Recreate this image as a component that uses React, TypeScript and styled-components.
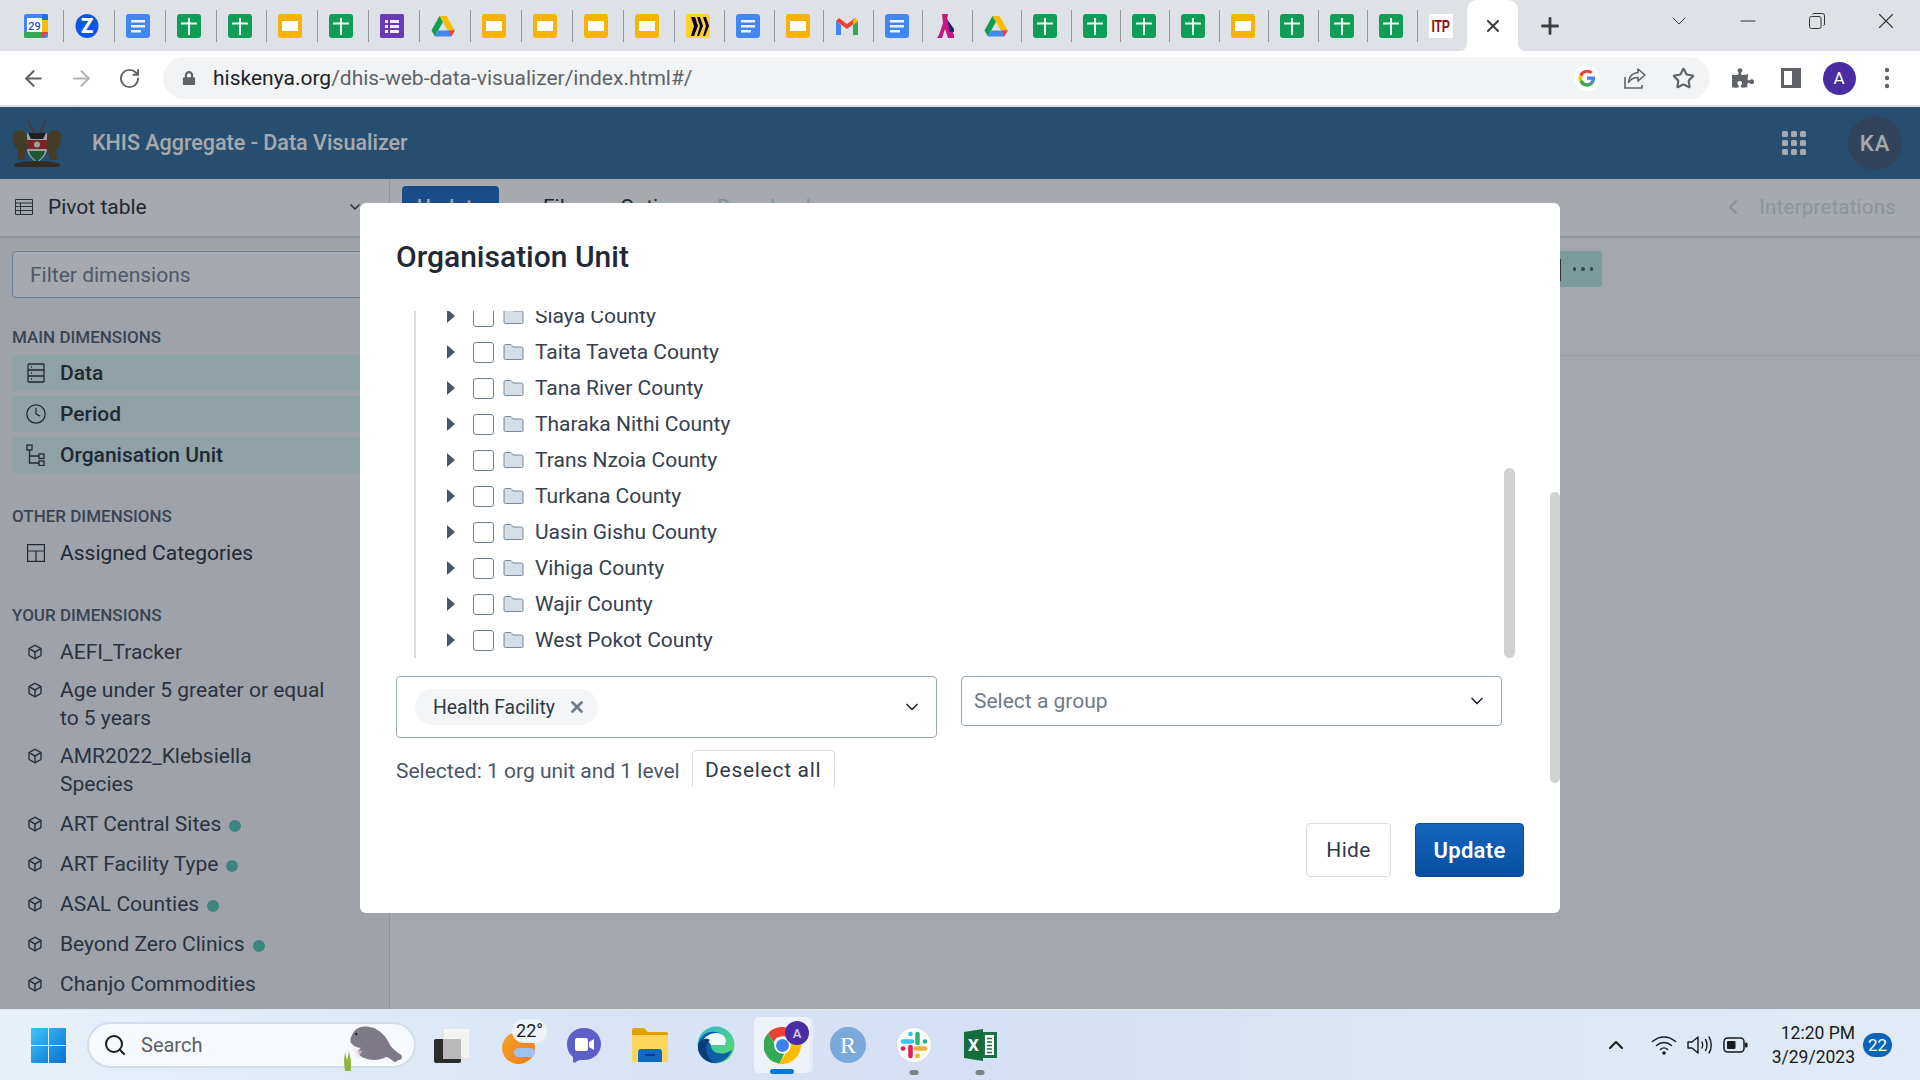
import React from 'react';
import styled, { createGlobalStyle } from 'styled-components';
import { ArrowLeft, ArrowRight, RotateCw, Star, Plus, X, ChevronDown, ChevronUp, ChevronLeft, Minus, Box, Clock, Search } from 'lucide-react';
import { FaPuzzlePiece, FaLock } from 'react-icons/fa';

const GlobalStyle = createGlobalStyle`
	html, body {
		margin: 0;
		padding: 0;
		width: 1920px;
		height: 1080px;
		overflow: hidden;
		font-family: Roboto, 'Liberation Sans', sans-serif;
	}
	* { box-sizing: border-box; }
`;

const Sheets = () => (
	<svg width='24' height='24' viewBox='0 0 24 24'>
		<rect width='24' height='24' rx='3' fill='#0f9d58' />
		<path d='M4 8.500h7V4h2v4.500h7v2h-7V21h-2V10.500H4z' fill='#f1f8f4' />
	</svg>
);
const Slides = () => (
	<svg width='24' height='24' viewBox='0 0 24 24'>
		<rect width='24' height='24' rx='3' fill='#f4b400' />
		<rect x='4' y='7' width='16' height='10' fill='#fff' />
	</svg>
);
const Docs = () => (
	<svg width='24' height='24' viewBox='0 0 24 24'>
		<rect width='24' height='24' rx='3' fill='#4285f4' />
		<path d='M5 6h14v2.400H5zM5 11h14v2.400H5zM5 16h10v2.400H5z' fill='#eef3fe' />
	</svg>
);
const Forms = () => (
	<svg width='24' height='24' viewBox='0 0 24 24'>
		<rect width='24' height='24' rx='1.500' fill='#673ab7' />
		<path d='M5 6h3v3H5zM10 6h9v3h-9zM5 11h3v3H5zM10 11h9v3h-9zM5 16h3v3H5zM10 16h9v3h-9z' fill='#efe9f8' />
	</svg>
);
const Drive = () => (
	<svg width='24' height='24' viewBox='0 0 24 24'>
		<path d='M8.500 2h7l8.300 14.600h-7z' fill='#fbbc04' />
		<path d='M8.500 2 .4 16.600l3.600 6L11.900 8z' fill='#0f9d58' />
		<path d='M7.600 16.600h16.200l-3.600 6H4z' fill='#4285f4' />
		<path d='M20.200 22.600l3.600-6h-6z' fill='#ea4335' />
	</svg>
);
const Miro = () => (
	<svg width='24' height='24' viewBox='0 0 24 24'>
		<rect x='0' width='24' height='24' rx='3' fill='#ffd02f' />
		<path d='M5 3l4 0 3 9-4 10H5l3-10zM11 3h3l3 9-4 10h-2l3-10zM17 3h3l3 9-4 10h-2l3-10z' fill='#050038' />
	</svg>
);
const Gmail = () => (
	<svg width='24' height='24' viewBox='0 0 24 24'>
		<path d='M1 7v14h5V11z' fill='#4285f4' />
		<path d='M18 11v10h5V7z' fill='#34a853' />
		<path d='M1 7l11 8 11-8-3-3-8 6-8-6z' fill='#ea4335' />
		<path d='M18 7l2-3 3 3-5 4z' fill='#fbbc04' />
	</svg>
);
const Ascent = () => (
	<svg width='24' height='24' viewBox='0 0 24 24'>
		<path d='M8 0h6l-1 5 7 16v3h-6l-3-9-3 9H3l2-3 4-12z' fill='#c8157f' />
		<path d='M13 5l7 10v3h-4z' fill='#1d2b6b' />
	</svg>
);
const CalendarIcon = () => (
	<svg width='24' height='24' viewBox='0 0 24 24'>
		<rect width='24' height='24' rx='2' fill='#4285f4' />
		<path d='M0 18h18v6H2a2 2 0 0 1-2-2z' fill='#34a853' />
		<path d='M18 0h4a2 2 0 0 1 2 2v4h-6z' fill='#1a73e8' />
		<path d='M18 6h6v12h-6z' fill='#fbbc04' />
		<path d='M18 18h6l-6 6z' fill='#ea4335' />
		<rect x='3' y='4' width='15' height='14' fill='#fff' />
		<text x='10.500' y='15.500' fontSize='11' textAnchor='middle' fill='#1a56b8' fontFamily='Roboto' fontWeight='500'>29</text>
	</svg>
);
const ZIcon = () => (
	<svg width='24' height='24' viewBox='0 0 24 24'>
		<ellipse cx='12' cy='12' rx='11.500' ry='12' fill='#0b57e8' />
		<text x='12' y='19' fontSize='20' textAnchor='middle' fill='#fff' fontFamily='Roboto' fontWeight='900'>Z</text>
	</svg>
);
const ItpMark = styled.div`
	width: 24px;
	height: 24px;
	background: #fff;
	color: #8b0f0f;
	display: flex;
	align-items: center;
	justify-content: center;
	span {
		display: block;
		font: 700 17px/1 'Liberation Sans', sans-serif;
		letter-spacing: -0.5px;
		transform: scaleX(0.72);
	}
`;

const tabIcons = [
	<CalendarIcon />, <ZIcon />, <Docs />, <Sheets />, <Sheets />, <Slides />, <Sheets />, <Forms />, <Drive />,
	<Slides />, <Slides />, <Slides />, <Slides />, <Miro />, <Docs />, <Slides />, <Gmail />, <Docs />, <Ascent />,
	<Drive />, <Sheets />, <Sheets />, <Sheets />, <Sheets />, <Slides />, <Sheets />, <Sheets />, <Sheets />,
	<ItpMark><span>ITP</span></ItpMark>,
];

const GoogleG = () => (
	<svg width='26' height='26' viewBox='0 0 24 24'>
		<circle cx='12' cy='12' r='12' fill='#fff' />
		<path d='M19.500 12.200c0-.6-.1-1.100-.2-1.600H12v3h4.200a3.600 3.600 0 0 1-1.600 2.400v2h2.500c1.500-1.400 2.400-3.400 2.400-5.800z' fill='#4285f4' />
		<path d='M12 20c2.100 0 3.900-.7 5.100-1.900l-2.500-2c-.7.500-1.600.8-2.600.8-2 0-3.700-1.400-4.300-3.200H5.100v2A8 8 0 0 0 12 20z' fill='#34a853' />
		<path d='M7.700 13.700a4.800 4.800 0 0 1 0-3.100v-2H5.100a8 8 0 0 0 0 7.100z' fill='#fbbc05' />
		<path d='M12 7.200c1.100 0 2.200.4 3 1.200l2.200-2.200A8 8 0 0 0 5.100 8.600l2.600 2C8.300 8.600 10 7.200 12 7.200z' fill='#ea4335' />
	</svg>
);
const ShareIcon = () => (
	<svg width='24' height='24' viewBox='0 0 24 24' fill='none' stroke='#5f6368' strokeWidth='1.600'>
		<path d='M2 11v11h17v-3' />
		<path d='M15 3l7 6-7 6v-3.500c-4 0-7 1-9.500 5 .5-5.500 4-9.500 9.500-10z' strokeLinejoin='round' />
	</svg>
);
const SidePanelIcon = () => (
	<svg width='22' height='22' viewBox='0 0 22 22'>
		<rect x='1' y='1' width='20' height='20' fill='#5f6368' />
		<rect x='4' y='4' width='8' height='14' fill='#fff' />
	</svg>
);
const Kebab = () => (
	<svg width='6' height='22' viewBox='0 0 6 22'>
		<circle cx='3' cy='3' r='2.200' fill='#5f6368' />
		<circle cx='3' cy='11' r='2.200' fill='#5f6368' />
		<circle cx='3' cy='19' r='2.200' fill='#5f6368' />
	</svg>
);
const RestoreIcon = () => (
	<svg width='16' height='16' viewBox='0 0 16 16' fill='none' stroke='#333' strokeWidth='1'>
		<rect x='.5' y='3.500' width='11.500' height='12' rx='2' />
		<path d='M3.500 1.500A1.500 1.500 0 0 1 5 .5h8.500a2 2 0 0 1 2 2V11a1.500 1.500 0 0 1-1 1.500' />
	</svg>
);

const CoatOfArms = () => (
	<svg width='52' height='50' viewBox='0 0 52 50'>
		<path d='M17 3l9 18M35 3l-9 18' stroke='#6e3a30' strokeWidth='1.500' />
		<path d='M2 16c3-5 9-5 12-1 3 4 3 12 1 18l-2 9H6l1-9c-4-5-6-11-5-17z' fill='#5e4a1d' />
		<path d='M50 16c-3-5-9-5-12-1-3 4-3 12-1 18l2 9h7l-1-9c4-5 6-11 5-17z' fill='#5e4a1d' />
		<path d='M16 15h20v15c0 7-5 11-10 15-5-4-10-8-10-15z' fill='#f2f2f2' />
		<path d='M17 15h18l-3 6H20z' fill='#1a1a1a' />
		<path d='M16 22h20v9H16z' fill='#b3261e' />
		<path d='M18 33h16c-1 5-5 8-8 11-3-3-7-6-8-11z' fill='#1b7a35' />
		<circle cx='26' cy='26.500' r='3' fill='#f2f2f2' />
		<path d='M3 46c8-4 38-4 46 0l-1 3H4z' fill='#3d2e14' />
	</svg>
);

const PivotIcon = () => (
	<svg width='18' height='16' viewBox='0 0 18 16' fill='none' stroke='#2b3440' strokeWidth='1'>
		<path d='M.5.500h17v15H.5zM.5 4h17M.5 7.500h17M.5 11.500h17M5.500 4v11.500' />
	</svg>
);
const DataIcon = () => (
	<svg width='18' height='20' viewBox='0 0 18 20' fill='none' stroke='#212934' strokeWidth='1.300'>
		<rect x='1' y='1' width='16' height='18' rx='1' />
		<path d='M1 7h16M1 13h16M4 4h1M4 10h1M4 16h1' />
	</svg>
);
const OrgIcon = () => (
	<svg width='20' height='22' viewBox='0 0 20 22' fill='none' stroke='#212934' strokeWidth='1.300'>
		<rect x='1' y='1' width='5' height='5' />
		<rect x='13' y='10' width='5' height='4.500' />
		<rect x='13' y='17' width='5' height='4.500' />
		<path d='M3.500 6v13H13M3.500 12H13' />
	</svg>
);
const CategoriesIcon = () => (
	<svg width='18' height='18' viewBox='0 0 18 18' fill='none' stroke='#212934' strokeWidth='1.200'>
		<rect x='.6' y='.6' width='16.800' height='16.800' />
		<path d='M.6 7h16.800M9 7v10.400' />
	</svg>
);
const FolderIcon = () => (
	<svg width='21' height='18' viewBox='0 0 21 18'>
		<path d='M1 3a1.500 1.500 0 0 1 1.500-1.500H8L10 4h8.500A1.500 1.500 0 0 1 20 5.500V15a1.500 1.500 0 0 1-1.500 1.500h-16A1.500 1.500 0 0 1 1 15z' fill='#d5dde5' stroke='#7b8a9c' strokeWidth='1' />
	</svg>
);
const Caret = () => (
	<svg width='8' height='14' viewBox='0 0 8 14'>
		<path d='M0 0l8 7-8 7z' fill='#4a5768' />
	</svg>
);

const Manatee = () => (
	<svg width='68' height='50' viewBox='0 0 68 54'>
		<path d='M5 54c-1-6-2-12 0-20 1 4 1 6 2 8 1-3 2-6 2-10 2 7 3 14 2 22z' fill='#8fb53c' />
		<path d='M12 16c3-8 10-11 17-10 11 1 20 9 25 21 3 4 8 7 12 10 1 3-1 6-4 5-1 2-3 3-4 2-4-2-6-5-9-5-5 3-13 4-20 2-4-1-9-3-10-7-1-3 2-3 3-5-4 0-9-2-11-6-1-2 0-5 1-7z' fill='#7f7a88' />
		<path d='M14 28c3 3 6 4 10 4-2 3-5 6-3 9-4-2-7-8-7-13z' fill='#f0dede' opacity='.6' />
		<circle cx='17' cy='14' r='1.300' fill='#222' />
	</svg>
);
const WinLogo = () => (
	<svg width='35' height='35' viewBox='0 0 35 35'>
		<defs>
			<linearGradient id='wl' x1='0' y1='0' x2='1' y2='1'>
				<stop offset='0' stopColor='#3bc4f8' />
				<stop offset='1' stopColor='#0a6fd0' />
			</linearGradient>
		</defs>
		<path d='M1 0h16v17H0V1a1 1 0 0 1 1-1zM18 0h16a1 1 0 0 1 1 1v16H18zM0 18h17v17H1a1 1 0 0 1-1-1zM18 18h17v16a1 1 0 0 1-1 1H18z' fill='url(#wl)' />
	</svg>
);
const TaskView = () => (
	<svg width='36' height='36' viewBox='0 0 36 36'>
		<rect x='9' y='1' width='27' height='31' rx='2' fill='#f3f3f3' stroke='#ddd' />
		<rect x='0' y='12' width='27' height='24' rx='2' fill='#2c2c2c' />
		<rect x='9' y='12' width='18' height='20' fill='#c9c9c9' opacity='.9' />
	</svg>
);
const Teams = () => (
	<svg width='36' height='36' viewBox='0 0 36 36'>
		<path d='M18 1c10 0 17 7 17 16s-7 16-17 16c-3 0-6 0-8 2-1 1-3 1-3-1v-4C3 27 1 22 1 17 1 8 8 1 18 1z' fill='#5b5fc7' />
		<rect x='9' y='11' width='13' height='13' rx='2' fill='#fff' />
		<path d='M23 15l5-3v11l-5-3z' fill='#fff' />
	</svg>
);
const FolderApp = () => (
	<svg width='36' height='34' viewBox='0 0 36 34'>
		<path d='M0 2a2 2 0 0 1 2-2h10l4 4h18a2 2 0 0 1 2 2v4H0z' fill='#e0a008' />
		<path d='M0 7h36v27H0z' fill='#ffd65c' />
		<path d='M6 24a3 3 0 0 1 3-3h18a3 3 0 0 1 3 3v10H6z' fill='#0f6cbd' />
		<rect x='13' y='26' width='10' height='2' fill='#0a3f75' />
	</svg>
);
const EdgeIcon = () => (
	<svg width='38' height='38' viewBox='0 0 38 38'>
		<defs>
			<linearGradient id='eg' x1='0' y1='0' x2='1' y2='1'>
				<stop offset='0' stopColor='#2bb8d6' />
				<stop offset='1' stopColor='#5fdc62' />
			</linearGradient>
		</defs>
		<circle cx='19' cy='19' r='18.500' fill='url(#eg)' />
		<path d='M1 20C2 10 10 5 18 6c9 1 13 7 10 13H14c-1 6 6 10 15 8 2-1 4-2 6-3-3 8-10 13-17 13C10 37 0 30 1 20z' fill='#0f5ea8' />
		<path d='M14 19h14c3-6-1-12-9-12-6 0-12 4-14 9 3-2 6-3 9 3z' fill='#fff' opacity='.95' />
		<path d='M17 37c-9-1-16-8-16-17 1-7 8-9 12-6-5 4-6 15 4 23z' fill='#0b3d7a' />
	</svg>
);
const ChromeIcon = () => (
	<svg width='37' height='37' viewBox='0 0 36 36'>
		<path d='M18 0a18 18 0 0 1 15.600 9H18a9 9 0 0 0-8.500 6L4 6A18 18 0 0 1 18 0z' fill='#ea4335' />
		<path d='M4 6l8 14a7 7 0 0 0 8 5l-5 10.700A18 18 0 0 1 4 6z' fill='#34a853' />
		<path d='M33.600 9A18 18 0 0 1 15 35.700l9-15a7 7 0 0 0 0-9z' fill='#fbbc04' />
		<circle cx='18' cy='18' r='8' fill='#fff' />
		<circle cx='18' cy='18' r='6.300' fill='#3b82f0' />
	</svg>
);
const SlackIcon = () => (
	<svg width='36' height='36' viewBox='0 0 36 36'>
		<circle cx='18' cy='18' r='17.500' fill='#fafafa' stroke='#d5d8de' />
		<g strokeWidth='4.600' strokeLinecap='round' fill='none'>
			<path d='M7 14.500h9' stroke='#36c5f0' />
			<path d='M14.500 7v.1' stroke='#36c5f0' />
			<path d='M21.500 7v9' stroke='#2eb67d' />
			<path d='M29 14.500h-.1' stroke='#2eb67d' />
			<path d='M29 21.500h-9' stroke='#ecb22e' />
			<path d='M21.500 29v-.1' stroke='#ecb22e' />
			<path d='M14.500 29v-9' stroke='#e01e5a' />
			<path d='M7 21.500h.1' stroke='#e01e5a' />
		</g>
	</svg>
);
const ExcelIcon = () => (
	<svg width='33' height='32' viewBox='0 0 33 32'>
		<path d='M18 3h15v26H18z' fill='#1d7044' />
		<path d='M21 6h9v20h-9z' fill='#fff' />
		<path d='M23 9.500h5M23 13h5M23 16.500h5M23 20h5M23 23.500h5' stroke='#1d7044' strokeWidth='1.500' />
		<path d='M0 3l19-3v32L0 29z' fill='#146c3c' />
		<text x='9.500' y='22' fontSize='17' fontWeight='700' fill='#fff' textAnchor='middle' fontFamily='Roboto'>X</text>
	</svg>
);
const WifiIcon = () => (
	<svg width='26' height='22' viewBox='0 0 26 22' fill='none' stroke='#1a1a1a' strokeWidth='1.500' strokeLinecap='round'>
		<path d='M1.500 7.500c7-6 16-6 23 0M5.500 11.500c4.500-4 10.500-4 15 0M9.500 15.500c2-2 5-2 7 0' />
		<circle cx='13' cy='19' r='1.800' fill='#1a1a1a' stroke='none' />
	</svg>
);
const VolumeIcon = () => (
	<svg width='26' height='22' viewBox='0 0 26 22' fill='none' stroke='#1a1a1a' strokeWidth='1.400' strokeLinecap='round' strokeLinejoin='round'>
		<path d='M1 8v6h4l6 5V3L5 8z' />
		<path d='M15 8c1 2 1 4 0 6M18.500 5.500c2 3 2 8 0 11M22 3c3 4.500 3 11.500 0 16' />
	</svg>
);
const BatteryIcon = () => (
	<svg width='25' height='16' viewBox='0 0 25 16'>
		<rect x='1' y='1' width='20' height='14' rx='3.500' fill='none' stroke='#1a1a1a' strokeWidth='1.500' />
		<rect x='4' y='4' width='8.500' height='8' rx='1' fill='#1a1a1a' />
		<rect x='22' y='5.500' width='2.500' height='5' rx='1' fill='#1a1a1a' />
	</svg>
);

const Page = styled.div`
	width: 1920px;
	height: 1080px;
	display: flex;
	flex-direction: column;
	overflow: hidden;
	background: #fff;
	color: #212934;
`;

const TabStrip = styled.div`
	height: 51px;
	flex: none;
	background: #dee1e6;
	display: flex;
	padding-left: 13px;
`;
const Tab = styled.div<{ $wide: boolean }>`
	position: relative;
	width: ${p => (p.$wide ? 50.9 : 49.45)}px;
	flex: none;
	padding: 14px 0 0 11px;
	border-right: 1px solid #94979c;
	border-image: linear-gradient(to bottom, transparent 11px, #94979c 11px, #94979c 41px, transparent 41px) 1;
`;
const LastTab = styled(Tab)`
	border: 0;
`;
const ActiveTab = styled.div`
	width: 51px;
	flex: none;
	background: #fff;
	border-radius: 10px 10px 0 0;
	display: flex;
	align-items: center;
	justify-content: center;
	color: #3c4043;
	position: relative;
	&::before,
	&::after {
		content: '';
		position: absolute;
		bottom: 0;
		width: 8px;
		height: 8px;
		background: radial-gradient(circle at 0 0, #dee1e6 8px, #fff 8.500px);
	}
	&::before {
		left: -8px;
	}
	&::after {
		right: -8px;
		background: radial-gradient(circle at 100% 0, #dee1e6 8px, #fff 8.500px);
	}
`;
const NewTab = styled.div`
	width: 64px;
	flex: none;
	display: flex;
	align-items: center;
	justify-content: center;
	color: #3c4043;
`;
const WindowControls = styled.div`
	margin-left: auto;
	display: flex;
`;
const WindowButton = styled.div`
	width: 69px;
	height: 42px;
	display: flex;
	align-items: center;
	justify-content: center;
	color: #333;
`;

const Toolbar = styled.div`
	height: 54px;
	flex: none;
	display: flex;
	align-items: center;
	padding: 0 0 0 9px;
	background: #fff;
	border-bottom: 0;
`;
const ToolButton = styled.div<{ $muted?: boolean }>`
	width: 48px;
	height: 48px;
	flex: none;
	display: flex;
	align-items: center;
	justify-content: center;
	color: ${p => (p.$muted ? '#b0b3b8' : '#5f6368')};
`;
const AddressBar = styled.div`
	width: 1547px;
	height: 42px;
	margin: 0 9px 0 10px;
	flex: none;
	border-radius: 21px;
	background: #f1f3f4;
	display: flex;
	align-items: center;
	padding: 0 3px 0 19px;
	color: #5f6368;
`;
const Url = styled.div`
	margin-left: 17px;
	font-size: 21px;
	color: #5f6368;
	white-space: nowrap;
	flex: 1;
	b {
		font-weight: 400;
		color: #202124;
	}
`;
const OmniIcon = styled.div`
	width: 48px;
	flex: none;
	display: flex;
	align-items: center;
	justify-content: center;
	color: #5f6368;
`;
const Profile = styled.div`
	width: 33px;
	height: 33px;
	border-radius: 50%;
	background: #4b2da3;
	color: #fff;
	display: flex;
	align-items: center;
	justify-content: center;
	font-size: 17px;
`;
const ToolbarLine = styled.div`
	height: 2px;
	flex: none;
	background: #dadce0;
`;

const AppArea = styled.div`
	position: relative;
	height: 902px;
	flex: none;
	overflow: hidden;
	display: flex;
	flex-direction: column;
	background: #fafafd;
`;
const HeaderBar = styled.header`
	height: 72px;
	flex: none;
	background: #2c6896;
	color: #fff;
	display: flex;
	align-items: center;
`;
const LogoSlot = styled.div`
	width: 74px;
	height: 100%;
	flex: none;
	padding-left: 11px;
	display: flex;
	align-items: center;
	border-right: 1px solid #2a6390;
`;
const AppTitle = styled.div`
	margin: 0 0 2px 18px;
	font-size: 21.500px;
	font-weight: 500;
	flex: 1;
`;
const AppsGrid = styled.div`
	display: grid;
	grid-template-columns: repeat(3, 6px);
	gap: 3px;
	margin-right: 42px;
	span {
		width: 6px;
		height: 6px;
		border-radius: 1.500px;
		background: #fff;
	}
`;
const UserBadge = styled.div`
	width: 54px;
	height: 54px;
	margin-right: 18px;
	border-radius: 50%;
	background: #3c5776;
	display: flex;
	align-items: center;
	justify-content: center;
	font-size: 22px;
	font-weight: 500;
	letter-spacing: 1px;
`;

const Workspace = styled.div`
	flex: 1;
	min-height: 0;
	display: flex;
`;
const Sidebar = styled.aside`
	width: 390px;
	flex: none;
	background: #f3f5f7;
	border-right: 1px solid #d8dde3;
	overflow: hidden;
`;
const VisType = styled.div`
	height: 59px;
	display: flex;
	align-items: center;
	padding: 0 0 2px 15px;
	gap: 15px;
	font-size: 21px;
	background: #fff;
	border-bottom: 2px solid #d8dde3;
	position: relative;
`;
const VisCaret = styled.span`
	margin-left: auto;
	margin-right: 26px;
	display: flex;
`;
const FilterInput = styled.div`
	height: 47px;
	margin: 13px 12px 0;
	padding-left: 17px;
	display: flex;
	align-items: center;
	border: 1px solid #a0b4cf;
	border-radius: 4px;
	background: #fff;
	font-size: 21px;
	color: #6e7a8a;
`;
const GroupHeading = styled.div<{ $top: number }>`
	margin: ${p => p.$top}px 0 0 12px;
	height: 20px;
	line-height: 20px;
	font-size: 17px;
	font-weight: 500;
	color: #4a5768;
	text-transform: uppercase;
`;
const MainList = styled.div`
	margin: 8px 0 0 12px;
	display: flex;
	flex-direction: column;
	gap: 5px;
`;
const MainItem = styled.div`
	height: 36px;
	display: flex;
	align-items: center;
	border-radius: 2px;
	background: #d9f3f0;
	font-size: 21px;
	font-weight: 500;
`;
const IconSlot = styled.span`
	width: 48px;
	flex: none;
	display: flex;
	justify-content: center;
`;
const PlainItem = styled.div`
	margin: 9px 0 0 12px;
	height: 36px;
	display: flex;
	align-items: center;
	font-size: 21px;
	color: #212934;
`;
const DimList = styled.div`
	margin: 13px 0 0 12px;
	display: flex;
	flex-direction: column;
`;
const DimItem = styled.div`
	display: flex;
	align-items: flex-start;
	margin-bottom: 12px;
	font-size: 21px;
	line-height: 28px;
	color: #2f3a48;
	&:nth-child(-n + 2) {
		margin-bottom: 10px;
	}
	svg {
		margin: 6px 2px 0 0;
	}
	span:last-child {
		max-width: 268px;
	}
`;
const DimDot = styled.span`
	display: inline-block;
	width: 12px;
	height: 12px;
	border-radius: 50%;
	background: #50c3b2;
	margin-left: 8px;
	vertical-align: -1px;
`;

const Content = styled.main`
	flex: 1;
	min-width: 0;
	display: flex;
	flex-direction: column;
`;
const ContentBar = styled.div`
	height: 59px;
	flex: none;
	display: flex;
	align-items: center;
	padding: 0 24px 2px 12px;
	background: #fff;
	border-bottom: 2px solid #d8dde3;
	font-size: 21px;
`;
const PrimaryAction = styled.div`
	width: 97px;
	height: 42px;
	margin-right: 44px;
	display: flex;
	align-items: center;
	justify-content: center;
	border-radius: 4px;
	background: #1565c0;
	color: #fff;
	font-weight: 500;
`;
const MenuText = styled.span<{ $w: number; $off?: boolean }>`
	width: ${p => p.$w}px;
	color: ${p => (p.$off ? '#c9d2da' : '#212934')};
`;
const Interpretations = styled.div`
	margin-left: auto;
	display: flex;
	align-items: center;
	gap: 14px;
	color: #d2dde6;
	font-size: 20.500px;
	letter-spacing: 0.2px;
`;
const LayoutRow = styled.div`
	height: 118px;
	flex: none;
	padding: 13px 0 0 1150px;
	border-bottom: 1px solid #eceef2;
	display: flex;
`;
const MoreChip = styled.div`
	position: relative;
	width: 62px;
	height: 36px;
	background: #b6e6e1;
	border-radius: 3px;
	display: flex;
	align-items: center;
	justify-content: flex-end;
	padding-right: 9px;
	gap: 5px;
	span {
		width: 3.500px;
		height: 3.500px;
		border-radius: 50%;
		background: #4a5768;
	}
	&::before {
		content: '';
		position: absolute;
		left: 19px;
		top: 8px;
		width: 2px;
		height: 22px;
		background: #2f3a48;
	}
`;

const Backdrop = styled.div`
	position: absolute;
	inset: 0;
	background: rgba(33, 41, 52, 0.4);
`;
const Dialog = styled.section`
	position: absolute;
	left: 360px;
	top: 96px;
	width: 1200px;
	height: 710px;
	padding: 36px 36px 36px 36px;
	background: #fff;
	border-radius: 6px;
	display: flex;
	flex-direction: column;
`;
const DialogTitle = styled.h2`
	margin: 0 0 36px;
	font-size: 30px;
	line-height: 36px;
	font-weight: 500;
	color: #212934;
`;
const TreeBox = styled.div`
	position: relative;
	height: 347px;
	flex: none;
	overflow: hidden;
`;
const TreeList = styled.div`
	margin: -13px 0 0 18px;
	padding-left: 30.500px;
	border-left: 2px solid #d5dde5;
`;
const TreeRow = styled.div`
	height: 36px;
	display: flex;
	align-items: center;
	font-size: 21px;
	color: #35404e;
`;
const TreeCheck = styled.span`
	width: 21px;
	height: 21px;
	margin: 0 9px 0 18.500px;
	flex: none;
	border: 1px solid #6f7f91;
	border-radius: 3px;
	background: #fff;
`;
const TreeLabel = styled.span`
	margin-left: 11px;
`;
const Scrollbar = styled.div`
	position: absolute;
	border-radius: 6px;
	background: #d0d1d2;
`;
const InnerScrollbar = styled(Scrollbar)`
	right: 9px;
	top: 157px;
	width: 11px;
	height: 190px;
`;
const OuterScrollbar = styled(Scrollbar)`
	right: 0;
	top: 289px;
	width: 10px;
	height: 291px;
`;
const SelectRow = styled.div`
	margin-top: 18px;
	display: flex;
	align-items: flex-start;
	gap: 24px;
`;
const SelectBox = styled.div<{ $tall?: boolean }>`
	width: 541px;
	height: ${p => (p.$tall ? 62 : 50)}px;
	padding: 0 14px 0 ${p => (p.$tall ? 18 : 12)}px;
	flex: none;
	display: flex;
	align-items: center;
	justify-content: space-between;
	border: 1px solid #99a6b6;
	border-radius: 4px;
	font-size: 21px;
	color: #6e7a8a;
`;
const LevelChip = styled.div`
	height: 36px;
	width: 183px;
	padding-left: 18px;
	display: flex;
	align-items: center;
	gap: 13px;
	border-radius: 18px;
	background: #f3f5f7;
	font-size: 19.400px;
	color: #2f3a48;
`;
const SelectionRow = styled.div`
	margin-top: 12px;
	height: 37px;
	display: flex;
	align-items: flex-start;
	overflow: hidden;
`;
const SelectionText = styled.span`
	font-size: 21px;
	line-height: 42px;
	color: #4a5768;
`;
const DeselectButton = styled.div`
	width: 143px;
	height: 50px;
	margin-left: 12px;
	text-align: center;
	border: 1px solid #d5dde5;
	border-radius: 4px;
	font-size: 21px;
	line-height: 39px;
	letter-spacing: 0.7px;
	color: #2f3a48;
`;
const DialogActions = styled.div`
	margin-top: auto;
	display: flex;
	justify-content: flex-end;
	gap: 24px;
`;
const Button = styled.div<{ $primary?: boolean }>`
	height: 54px;
	width: ${p => (p.$primary ? 109 : 85)}px;
	display: flex;
	align-items: center;
	justify-content: center;
	border-radius: 4px;
	font-size: ${p => (p.$primary ? 22 : 21)}px;
	letter-spacing: 0.3px;
	font-weight: ${p => (p.$primary ? 600 : 400)};
	color: ${p => (p.$primary ? '#fff' : '#2f3a48')};
	border: 1px solid ${p => (p.$primary ? '#0a4f9e' : '#d5dde5')};
	background: ${p => (p.$primary ? 'linear-gradient(180deg, #1565c0, #054fa0)' : '#fff')};
`;

const Taskbar = styled.footer`
	flex: 1;
	display: flex;
	align-items: center;
	background: linear-gradient(90deg, #e8f1f9 0%, #d9e5f7 30%, #d5dff5 50%, #dde7f5 75%, #e0ebf5 100%);
	border-top: 1px solid #dfe6ee;
`;
const AppSlot = styled.div`
	position: relative;
	width: 66px;
	height: 56px;
	flex: none;
	display: flex;
	align-items: center;
	justify-content: center;
`;
const ActiveAppSlot = styled(AppSlot)`
	&::before {
		content: '';
		position: absolute;
		left: 5px;
		top: 0;
		width: 56px;
		height: 56px;
		border-radius: 5px;
		background: #edf2fb;
		box-shadow: 4px 0 0 -1px #e6ecf8;
	}
	svg {
		position: relative;
	}
`;
const RunningMark = styled.span<{ $active?: boolean }>`
	position: absolute;
	bottom: ${p => (p.$active ? -1 : -2)}px;
	left: 50%;
	transform: translateX(-50%);
	width: ${p => (p.$active ? 24 : 9)}px;
	height: 5px;
	border-radius: 3px;
	background: ${p => (p.$active ? '#0a78d4' : '#7a7f88')};
`;
const StartSlot = styled.div`
	margin-left: 15px;
	width: 66px;
	flex: none;
	display: flex;
	justify-content: center;
`;
const SearchPill = styled.div`
	position: relative;
	width: 329px;
	height: 46px;
	margin: 0 3px 0 6px;
	padding-left: 14px;
	flex: none;
	display: flex;
	align-items: center;
	gap: 14px;
	border-radius: 23px;
	background: #f6f9fe;
	border: 2px solid #d3dcea;
	font-size: 20px;
	color: #5c5f66;
`;
const MascotSpot = styled.span`
	position: absolute;
	right: 8px;
	top: -3px;
`;
const WeatherOrb = styled.span`
	position: relative;
	width: 33px;
	height: 32px;
	margin-top: 6px;
	border-radius: 50%;
	background: linear-gradient(120deg, #f4a12d, #ee7b18);
	&::after {
		content: '';
		position: absolute;
		left: 12px;
		bottom: 7px;
		width: 21px;
		height: 9px;
		border-radius: 6px;
		background: #9fc3ec;
	}
`;
const WeatherBubble = styled.span`
	position: absolute;
	left: 27px;
	top: 2px;
	width: 35px;
	height: 24px;
	border-radius: 12px;
	background: #eef3fa;
	font-size: 18px;
	text-align: center;
	line-height: 24px;
	color: #1a1a1a;
`;
const ChromeBadge = styled.span`
	position: absolute;
	right: 6px;
	top: 4px;
	width: 24px;
	height: 24px;
	border-radius: 50%;
	background: #4b2da3;
	color: #d9cdf2;
	font-size: 13px;
	font-weight: 500;
	display: flex;
	align-items: center;
	justify-content: center;
`;
const RBadge = styled.span`
	width: 36px;
	height: 36px;
	border-radius: 50%;
	background: #7aa9d9;
	color: #fff;
	font: 400 24px/36px 'Liberation Serif', serif;
	text-align: center;
`;
const Tray = styled.div`
	margin-left: auto;
	display: flex;
	align-items: center;
`;
const TrayIcon = styled.span<{ $w: number }>`
	width: ${p => p.$w}px;
	flex: none;
	display: flex;
	align-items: center;
	justify-content: center;
	color: #1a1a1a;
`;
const Clockface = styled.div`
	margin-left: 18px;
	text-align: right;
	font-size: 17.500px;
	line-height: 24px;
	color: #1a1a1a;
`;
const NotifyBadge = styled.span`
	width: 29px;
	height: 24px;
	margin: 0 28px 0 8px;
	border-radius: 12px;
	background: #0a63b8;
	color: #fff;
	font-size: 17px;
	display: flex;
	align-items: center;
	justify-content: center;
`;

const counties = [
	'Siaya County',
	'Taita Taveta County',
	'Tana River County',
	'Tharaka Nithi County',
	'Trans Nzoia County',
	'Turkana County',
	'Uasin Gishu County',
	'Vihiga County',
	'Wajir County',
	'West Pokot County',
];

const dimensions = [
	{ name: 'AEFI_Tracker' },
	{ name: 'Age under 5 greater or equal to 5 years' },
	{ name: 'AMR2022_Klebsiella Species' },
	{ name: 'ART Central Sites', dot: true },
	{ name: 'ART Facility Type', dot: true },
	{ name: 'ASAL Counties', dot: true },
	{ name: 'Beyond Zero Clinics', dot: true },
	{ name: 'Chanjo Commodities' },
];

const App = () => (
	<Page>
		<GlobalStyle />
		<TabStrip>
			{tabIcons.map((icon, i) =>
				i === tabIcons.length - 1 ? (
					<LastTab key={i} $wide={false}>{icon}</LastTab>
				) : (
					<Tab key={i} $wide={i < 14}>{icon}</Tab>
				),
			)}
			<ActiveTab><X size={20} strokeWidth={2.6} /></ActiveTab>
			<NewTab><Plus size={26} strokeWidth={2.6} /></NewTab>
			<WindowControls>
				<WindowButton><ChevronDown size={24} strokeWidth={1} /></WindowButton>
				<WindowButton><Minus size={24} strokeWidth={1.2} /></WindowButton>
				<WindowButton><RestoreIcon /></WindowButton>
				<WindowButton><X size={26} strokeWidth={1} /></WindowButton>
			</WindowControls>
		</TabStrip>

		<Toolbar>
			<ToolButton><ArrowLeft size={25} strokeWidth={2} /></ToolButton>
			<ToolButton $muted><ArrowRight size={25} strokeWidth={2} /></ToolButton>
			<ToolButton><RotateCw size={23} strokeWidth={2} /></ToolButton>
			<AddressBar>
				<FaLock size={14} />
				<Url><b>hiskenya.org</b>/dhis-web-data-visualizer/index.html#/</Url>
				<OmniIcon><GoogleG /></OmniIcon>
				<OmniIcon><ShareIcon /></OmniIcon>
				<OmniIcon><Star size={23} strokeWidth={2.2} /></OmniIcon>
			</AddressBar>
			<OmniIcon><FaPuzzlePiece size={22} /></OmniIcon>
			<OmniIcon><SidePanelIcon /></OmniIcon>
			<OmniIcon><Profile>A</Profile></OmniIcon>
			<OmniIcon><Kebab /></OmniIcon>
		</Toolbar>
		<ToolbarLine />

		<AppArea>
			<HeaderBar>
				<LogoSlot><CoatOfArms /></LogoSlot>
				<AppTitle>KHIS Aggregate - Data Visualizer</AppTitle>
				<AppsGrid>{Array.from({ length: 9 }, (_, i) => <span key={i} />)}</AppsGrid>
				<UserBadge>KA</UserBadge>
			</HeaderBar>
			<Workspace>
				<Sidebar>
					<VisType>
						<PivotIcon />
						Pivot table
						<VisCaret><ChevronDown size={16} /></VisCaret>
					</VisType>
					<FilterInput>Filter dimensions</FilterInput>
					<GroupHeading $top={29}>Main dimensions</GroupHeading>
					<MainList>
						<MainItem><IconSlot><DataIcon /></IconSlot>Data</MainItem>
						<MainItem><IconSlot><Clock size={22} strokeWidth={1.4} /></IconSlot>Period</MainItem>
						<MainItem><IconSlot><OrgIcon /></IconSlot>Organisation Unit</MainItem>
					</MainList>
					<GroupHeading $top={33}>Other dimensions</GroupHeading>
					<PlainItem><IconSlot><CategoriesIcon /></IconSlot>Assigned Categories</PlainItem>
					<GroupHeading $top={34}>Your dimensions</GroupHeading>
					<DimList>
						{dimensions.map(d => (
							<DimItem key={d.name}>
								<IconSlot><Box size={16} strokeWidth={2.2} /></IconSlot>
								<span>{d.name}{d.dot && <DimDot />}</span>
							</DimItem>
						))}
					</DimList>
				</Sidebar>
				<Content>
					<ContentBar>
						<PrimaryAction>Update</PrimaryAction>
						<MenuText $w={77}>File</MenuText>
						<MenuText $w={97}>Options</MenuText>
						<MenuText $w={100} $off>Download</MenuText>
						<Interpretations>
							<ChevronLeft size={24} strokeWidth={2.4} />
							Interpretations
						</Interpretations>
					</ContentBar>
					<LayoutRow>
						<MoreChip><span /><span /><span /></MoreChip>
					</LayoutRow>
				</Content>
			</Workspace>

			<Backdrop />
			<Dialog>
				<DialogTitle>Organisation Unit</DialogTitle>
				<TreeBox>
					<TreeList>
						{counties.map(c => (
							<TreeRow key={c}>
								<Caret />
								<TreeCheck />
								<FolderIcon />
								<TreeLabel>{c}</TreeLabel>
							</TreeRow>
						))}
					</TreeList>
					<InnerScrollbar />
				</TreeBox>
				<SelectRow>
					<SelectBox $tall>
						<LevelChip>Health Facility<X size={18} strokeWidth={3.6} color='#6e7a8a' /></LevelChip>
						<ChevronDown size={20} strokeWidth={2} color='#212934' />
					</SelectBox>
					<SelectBox>
						Select a group
						<ChevronDown size={20} strokeWidth={2} color='#212934' />
					</SelectBox>
				</SelectRow>
				<SelectionRow>
					<SelectionText>Selected: 1 org unit and 1 level</SelectionText>
					<DeselectButton>Deselect all</DeselectButton>
				</SelectionRow>
				<DialogActions>
					<Button>Hide</Button>
					<Button $primary>Update</Button>
				</DialogActions>
				<OuterScrollbar />
			</Dialog>
		</AppArea>

		<Taskbar>
			<StartSlot><WinLogo /></StartSlot>
			<SearchPill>
				<Search size={24} strokeWidth={2} color='#1a1a1a' />
				Search
				<MascotSpot><Manatee /></MascotSpot>
			</SearchPill>
			<AppSlot><TaskView /></AppSlot>
			<AppSlot>
				<WeatherOrb />
				<WeatherBubble>22°</WeatherBubble>
			</AppSlot>
			<AppSlot><Teams /></AppSlot>
			<AppSlot><FolderApp /></AppSlot>
			<AppSlot><EdgeIcon /></AppSlot>
			<ActiveAppSlot>
				<ChromeIcon />
				<ChromeBadge>A</ChromeBadge>
				<RunningMark $active />
			</ActiveAppSlot>
			<AppSlot><RBadge>R</RBadge></AppSlot>
			<AppSlot><SlackIcon /><RunningMark /></AppSlot>
			<AppSlot><ExcelIcon /><RunningMark /></AppSlot>
			<Tray>
				<TrayIcon $w={60}><ChevronUp size={24} strokeWidth={2} /></TrayIcon>
				<TrayIcon $w={36}><WifiIcon /></TrayIcon>
				<TrayIcon $w={36}><VolumeIcon /></TrayIcon>
				<TrayIcon $w={36}><BatteryIcon /></TrayIcon>
				<Clockface>12:20 PM<br />3/29/2023</Clockface>
				<NotifyBadge>22</NotifyBadge>
			</Tray>
		</Taskbar>
	</Page>
);

export default App;
